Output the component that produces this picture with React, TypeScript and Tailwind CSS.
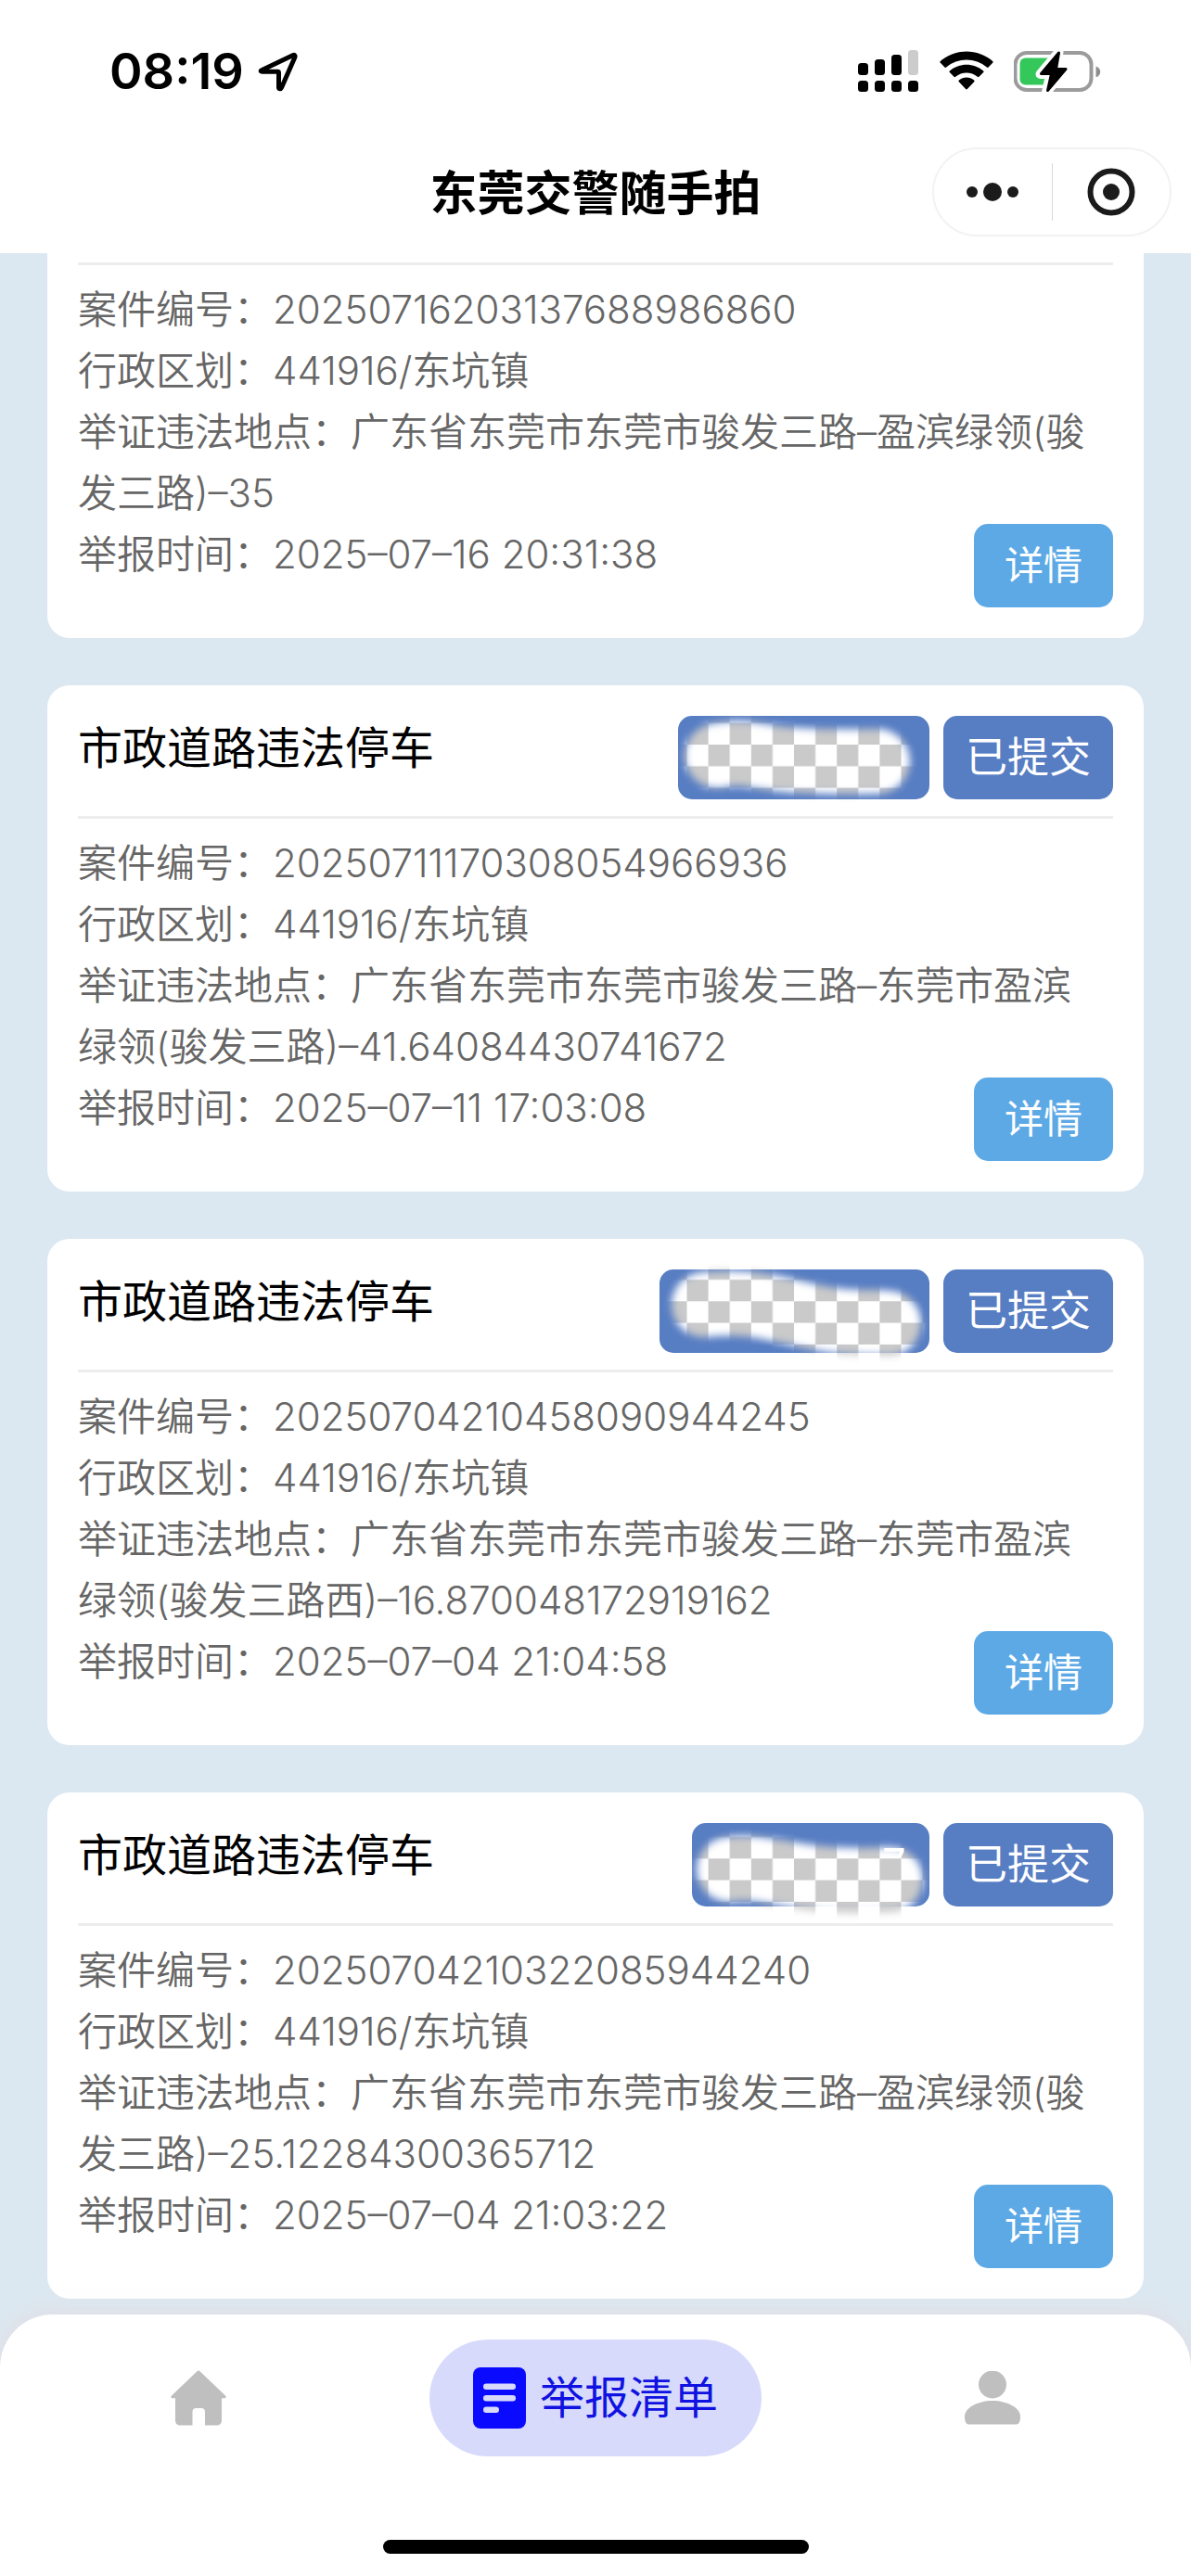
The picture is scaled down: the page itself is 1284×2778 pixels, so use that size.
import * as React from "react";

// 举报记录
type Report = {
  id: string;
  title: string;
  region: string;
  place: string;
  time: string;
  plate: Plate;
};

// 打码后的车牌标签
type Plate = {
  box: string;
  width: number;
  gridX: number;
  gridY: number;
  stroke: string;
  tail?: string;
};

const plates: Record<"wide" | "wider" | "narrow", Plate> = {
  wide: {
    box: "w-[271px]",
    width: 271,
    gridX: 32.6,
    gridY: 31,
    stroke: "M42 43 C62 38 74 41 100 45 S180 50 215 49",
  },
  wider: {
    box: "w-[291px]",
    width: 291,
    gridX: 52.6,
    gridY: 34.3,
    stroke: "M48 38 C100 32 130 44 170 52 S220 55 247 58",
  },
  narrow: {
    box: "w-[256px]",
    width: 256,
    gridX: 17.6,
    gridY: 38.3,
    stroke: "M40 50 C70 46 90 54 130 59 S190 61 214 61",
    tail: "7",
  },
};

const reports: Report[] = [
  {
    id: "20250716203137688986860",
    title: "市政道路违法停车",
    region: "441916/东坑镇",
    place: "广东省东莞市东莞市骏发三路–盈滨绿领(骏发三路)–35",
    time: "2025–07–16 20:31:38",
    plate: plates.wide,
  },
  {
    id: "20250711170308054966936",
    title: "市政道路违法停车",
    region: "441916/东坑镇",
    place: "广东省东莞市东莞市骏发三路–东莞市盈滨绿领(骏发三路)–41.64084430741672",
    time: "2025–07–11 17:03:08",
    plate: plates.wide,
  },
  {
    id: "20250704210458090944245",
    title: "市政道路违法停车",
    region: "441916/东坑镇",
    place: "广东省东莞市东莞市骏发三路–东莞市盈滨绿领(骏发三路西)–16.870048172919162",
    time: "2025–07–04 21:04:58",
    plate: plates.wider,
  },
  {
    id: "20250704210322085944240",
    title: "市政道路违法停车",
    region: "441916/东坑镇",
    place: "广东省东莞市东莞市骏发三路–盈滨绿领(骏发三路)–25.12284300365712",
    time: "2025–07–04 21:03:22",
    plate: plates.narrow,
  },
];

function StatusBar() {
  return (
    <div className="flex h-[154px] items-center justify-between pr-[96px] pl-[118px]">
      <div className="flex items-center gap-[15px]">
        <span className="text-[54px] leading-[66px] font-semibold">08:19</span>
        <svg className="h-[44px] w-[44px]" viewBox="0 0 44 44" fill="none" aria-hidden="true">
          <path
            d="M4.5 20.5 38 4.5c1.400-.6 2.600.6 2 2L25.500 39.500c-.8 1.800-3 1.600-3-.5V23.500c0-.8-.4-1.200-1.200-1.200H5c-2.200 0-2.400-1-.5-1.800Z"
            stroke="#000"
            strokeWidth="5"
            strokeLinejoin="round"
          />
        </svg>
      </div>
      <div className="flex items-center gap-[22px]">
        <svg className="h-[46px] w-[66px]" viewBox="0 0 66 46" aria-hidden="true">
          <rect x="0" y="14" width="11" height="13" rx="3.500" />
          <rect x="18" y="10" width="11" height="17" rx="3.500" />
          <rect x="36" y="5" width="11" height="22" rx="3.500" />
          <rect x="54" y="0" width="11" height="27" rx="3.500" fill="#ccc" />
          <rect x="0" y="33" width="11" height="12" rx="3.500" />
          <rect x="18" y="33" width="11" height="12" rx="3.500" />
          <rect x="36" y="33" width="11" height="12" rx="3.500" />
          <rect x="54" y="33" width="11" height="12" rx="3.500" />
        </svg>
        <svg className="h-[44px] w-[58px]" viewBox="0 0 58 44" aria-hidden="true">
          <path d="M.8 12.800a1.200 1.200 0 0 1 0-1.700C16.500-3 41.500-3 57.200 11.100c.5.5.5 1.200 0 1.700l-4.600 4.700c-.5.5-1.200.5-1.700 0-12.300-10.800-31.500-10.800-43.800 0-.5.5-1.200.5-1.700 0Z" />
          <path d="M10.800 23.100c-.5-.5-.5-1.200 0-1.700 10.300-9 26.100-9 36.400 0 .5.5.5 1.200 0 1.700l-4.700 4.700c-.5.5-1.200.5-1.700 0-6.800-5.700-16.800-5.700-23.600 0-.5.5-1.200.5-1.700 0Z" />
          <path d="M20.800 33.200c-.5-.5-.5-1.200 0-1.700 4.700-3.900 11.700-3.900 16.400 0 .5.5.5 1.200 0 1.700l-7.300 7.900c-.5.5-1.300.5-1.800 0Z" />
        </svg>
        <svg className="h-[48px] w-[95px]" viewBox="0 0 95 48" aria-hidden="true">
          <rect x="1.500" y="4" width="82" height="40" rx="12.500" fill="none" stroke="#9b9b9b" strokeWidth="4" />
          <path d="M88.500 18.500c3 1 4.700 3.100 4.700 5.900s-1.700 4.900-4.700 5.900Z" fill="#8e8e8e" />
          <rect x="6.500" y="9.500" width="36" height="29" rx="6" fill="#34c759" />
          <path
            d="M48.500 3 28.500 27h10.800L35 46.500 57 20.500H45Z"
            fill="#fff"
            stroke="#fff"
            strokeWidth="10"
            strokeLinejoin="round"
          />
          <path
            d="M48.500 4 29.500 26.500h11L36.500 44.500 56 21.500H45.500Z"
            stroke="#000"
            strokeWidth="3"
            strokeLinejoin="round"
          />
        </svg>
      </div>
    </div>
  );
}

function TitleBar() {
  return (
    <div className="grid h-[119px] grid-cols-[1fr_auto_1fr] items-start pt-[5px]">
      <h1 className="col-start-2 text-[51px] leading-[99px] font-semibold">东莞交警随手拍</h1>
      <div className="mr-[21px] flex h-[96px] w-[258px] items-center justify-self-end rounded-full border-2 border-[#f2f2f2]">
        <button type="button" aria-label="更多" className="flex flex-1 justify-center">
          <svg className="h-[20px] w-[56px]" viewBox="0 0 56 20" fill="#1b1b1b" aria-hidden="true">
            <circle cx="6" cy="10" r="6" />
            <circle cx="28" cy="10" r="10" />
            <circle cx="50" cy="10" r="6" />
          </svg>
        </button>
        <span className="h-[62px] w-px bg-[#d9d9d9]" />
        <button type="button" aria-label="关闭" className="flex flex-1 justify-center">
          <svg className="h-[52px] w-[52px]" viewBox="0 0 52 52" aria-hidden="true">
            <circle cx="26" cy="26" r="22.500" fill="none" stroke="#1b1b1b" strokeWidth="6" />
            <circle cx="26" cy="26" r="9" fill="#1b1b1b" />
          </svg>
        </button>
      </div>
    </div>
  );
}

function PlateTag({ plate }: { plate: Plate }) {
  const uid = React.useId();

  return (
    <div className={`h-[90px] rounded-[15px] bg-[#577dc3] ${plate.box}`}>
      <svg
        className="h-[90px] w-full overflow-visible"
        viewBox={`0 0 ${plate.width} 90`}
        aria-hidden="true"
      >
        <defs>
          <pattern
            id={`${uid}-grid`}
            x={plate.gridX}
            y={plate.gridY}
            width="46.200"
            height="46.600"
            patternUnits="userSpaceOnUse"
          >
            <rect width="46.200" height="46.600" fill="#fff" />
            <rect width="23.100" height="23.300" fill="#cacaca" />
            <rect x="23.100" y="23.300" width="23.100" height="23.300" fill="#cacaca" />
          </pattern>
          <filter
            id={`${uid}-soft`}
            x="-20"
            y="-20"
            width="340"
            height="150"
            filterUnits="userSpaceOnUse"
          >
            <feGaussianBlur stdDeviation="4" />
          </filter>
          <mask id={`${uid}-mask`} x="-20" y="-20" width="340" height="150" maskUnits="userSpaceOnUse">
            <path
              d={plate.stroke}
              fill="none"
              stroke="#fff"
              strokeWidth="70"
              strokeLinecap="round"
              filter={`url(#${uid}-soft)`}
            />
          </mask>
          <clipPath id={`${uid}-top`}>
            <rect x="0" y="0" width="300" height="38" />
          </clipPath>
        </defs>
        <rect
          x="-20"
          y="-20"
          width="340"
          height="150"
          fill={`url(#${uid}-grid)`}
          mask={`url(#${uid}-mask)`}
        />
        {plate.tail && (
          <text x="205" y="60" fontSize="45" fill="#fff" clipPath={`url(#${uid}-top)`}>
            {plate.tail}
          </text>
        )}
      </svg>
    </div>
  );
}

function ReportCard({ report }: { report: Report }) {
  return (
    <article className="rounded-[24px] bg-white p-[33px]">
      <div className="flex items-start justify-between border-b-3 border-[#ededed] pb-[18px]">
        <h2 className="text-[48px] leading-[69px] text-black">{report.title}</h2>
        <div className="flex gap-[15px]">
          <PlateTag plate={report.plate} />
          <span className="rounded-[15px] bg-[#577dc3] px-6 text-[45px] leading-[90px] text-white">
            已提交
          </span>
        </div>
      </div>
      <div className="pt-[15px] text-[42px] leading-[66px] font-[350] text-[#666]">
        <p>{`案件编号：${report.id}`}</p>
        <p>{`行政区划：${report.region}`}</p>
        <p className="pr-3 break-all">{`举证违法地点：${report.place}`}</p>
        <div className="flex items-start justify-between">
          <p>{`举报时间：${report.time}`}</p>
          <button
            type="button"
            className="rounded-[15px] bg-[#5da9e6] px-[33px] leading-[90px] font-normal text-white"
          >
            详情
          </button>
        </div>
      </div>
    </article>
  );
}

function TabBar() {
  return (
    <nav className="relative flex h-[282px] flex-col items-center justify-between rounded-t-[57px] bg-white pt-[27px] pb-6 shadow-[0_0_24px_rgba(240,200,200,0.4)]">
      <div className="grid w-full grid-cols-3 items-center justify-items-center">
        <a href="#home" aria-label="首页">
          <svg className="h-[60px] w-[60px]" viewBox="0 0 60 60" fill="#bfbfbf" aria-hidden="true">
            <path d="M28.500 1.300a2.200 2.200 0 0 1 3 0L59 27.500c1.300 1.300.6 2.800-1 2.800h-3V54c0 3.300-2 5.500-5 5.500H37V45c0-2.600-1.400-4-4-4h-5.500c-2.600 0-4 1.400-4 4v14.500H10c-3 0-5-2.200-5-5.500V30.300H2c-1.600 0-2.300-1.500-1-2.800Z" />
          </svg>
        </a>
        <a
          href="#reports"
          aria-current="page"
          className="flex h-[126px] items-center gap-[15px] rounded-full bg-[#d8dafc] px-[47px] text-[48px] whitespace-nowrap text-[#0f12e0]"
        >
          <svg className="h-[66px] w-[57px]" viewBox="0 0 57 66" aria-hidden="true">
            <rect width="57" height="66" rx="8" fill="#0a0aff" />
            <rect x="11" y="17.500" width="35" height="6.500" rx="3.200" fill="#d8dafc" />
            <rect x="11" y="30" width="35" height="6.500" rx="3.200" fill="#d8dafc" />
            <rect x="11" y="42.500" width="17" height="6.500" rx="3.200" fill="#d8dafc" />
          </svg>
          举报清单
        </a>
        <a href="#me" aria-label="我的">
          <svg className="h-[58px] w-[60px]" viewBox="0 0 60 58" fill="#bfbfbf" aria-hidden="true">
            <circle cx="30" cy="14.500" r="15" />
            <path d="M0 49c0-9 13.400-17 30-17s30 8 30 17c0 6-1.500 8.500-5 8.500H5C1.500 57.500 0 55 0 49Z" />
          </svg>
        </a>
      </div>
      <div className="h-[15px] w-[459px] rounded-full bg-black" />
    </nav>
  );
}

export default function App() {
  return (
    <div
      lang="zh-CN"
      className="flex h-screen flex-col bg-[#dce8f1] font-['Inter','Noto_Sans_CJK_SC',sans-serif] text-black"
    >
      <header className="bg-white">
        <StatusBar />
        <TitleBar />
      </header>
      {/* 列表默认停在底部 */}
      <main className="flex min-h-0 flex-1 flex-col-reverse overflow-y-auto px-[51px] pb-[17px] [scrollbar-width:none]">
        <div className="flex flex-col gap-[51px]">
          {reports.map((report) => (
            <ReportCard key={report.id} report={report} />
          ))}
        </div>
      </main>
      <TabBar />
    </div>
  );
}
